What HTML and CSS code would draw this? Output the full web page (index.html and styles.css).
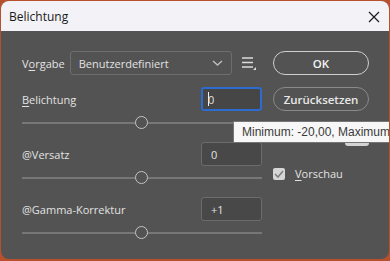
FILE: index.html
```html
<!DOCTYPE html>
<html lang="de">
<head>
    <meta charset="UTF-8">
    <title>Belichtung</title>
    <link rel="stylesheet" href="styles.css">
</head>
<body>
    <div class="window">
        <div class="titlebar">
            <span class="title">Belichtung</span>
            <svg class="close" width="12" height="12" viewBox="0 0 12 12">
                <path d="M1 1 L11 11 M11 1 L1 11" stroke="#1a1a1a" stroke-width="1.2" fill="none"/>
            </svg>
        </div>

        <div class="content">
            <div class="left">
                <div class="row">
                    <span class="label">V<u>o</u>rgabe</span>
                    <div class="select">
                        <span>Benutzerdefiniert</span>
                        <svg width="11" height="6" viewBox="0 0 11 6">
                            <path d="M1 1 L5.5 5 L10 1" stroke="#bdbdbd" stroke-width="1.4" fill="none"/>
                        </svg>
                    </div>
                    <svg class="menu-icon" width="15" height="14" viewBox="0 0 15 14">
                        <path d="M0 1 H11 M0 5.5 H11 M0 10 H11" stroke="#dcdcdc" stroke-width="1.6"/>
                        <path d="M11 13 L14 10 L14 13 Z" fill="#dcdcdc"/>
                    </svg>
                </div>

                <div class="row field">
                    <span class="label"><u>B</u>elichtung</span>
                    <div class="input focused"><span class="caret"></span>0</div>
                </div>
                <div class="slider"><span class="thumb"></span></div>

                <div class="row field">
                    <span class="label">@Versatz</span>
                    <div class="input">0</div>
                </div>
                <div class="slider"><span class="thumb"></span></div>

                <div class="row field">
                    <span class="label">@Gamma-Korrektur</span>
                    <div class="input">+1</div>
                </div>
                <div class="slider"><span class="thumb"></span></div>
            </div>

            <div class="right">
                <button class="btn primary">OK</button>
                <button class="btn">Zurücksetzen</button>
                <div class="hidden-btn"></div>
                <label class="check">
                    <span class="box">
                        <svg width="10" height="8" viewBox="0 0 10 8">
                            <path d="M1 4 L4 7 L9 1" stroke="#7d7d7d" stroke-width="1.5" fill="none"/>
                        </svg>
                    </span>
                    <span><u>V</u>orschau</span>
                </label>
            </div>
        </div>

        <div class="tooltip">Minimum: -20,00, Maximum</div>
    </div>
</body>
</html>
```

FILE: styles.css
```css
body {
    margin: 0;
    background-color: #b8502e;
    font-family: "Open Sans", "Noto Sans", sans-serif;
    overflow: hidden;
}

.window {
    position: relative;
    margin: 1px;
    height: 258px;
    background-color: #535353;
    border-radius: 8px;
    overflow: hidden;
}

.titlebar {
    height: 30px;
    background-color: #f3f3f7;
    display: flex;
    align-items: center;
    justify-content: space-between;
    padding: 0 9px 0 8px;
}
.title {
    font-size: 12px;
    color: #1a1a1a;
}
.close {
    margin-top: 1px;
}

.content {
    display: flex;
    gap: 11px;
    padding: 20px 20px 0 21px;
    color: #e2e2e2;
    font-size: 11px;
}

.left {
    width: 240px;
    display: flex;
    flex-direction: column;
}
.right {
    width: 96px;
    display: flex;
    flex-direction: column;
    gap: 12px;
}

.row {
    display: flex;
    align-items: center;
    height: 24px;
}
.row.field {
    justify-content: space-between;
    margin-top: 12px;
}
.row u {
    text-decoration-thickness: 1px;
    text-underline-offset: 2px;
}
.label {
    white-space: nowrap;
}

.select {
    width: 162px;
    height: 24px;
    margin-left: 5px;
    border: 1px solid #6e6e6e;
    border-radius: 3px;
    display: flex;
    align-items: center;
    justify-content: space-between;
    padding: 0 8px 0 8px;
    box-sizing: border-box;
}
.menu-icon {
    margin-left: 10px;
    margin-top: 2px;
}

.input {
    width: 61px;
    height: 24px;
    box-sizing: border-box;
    border: 1px solid #6c6c6c;
    border-radius: 3px;
    background-color: #484848;
    padding-left: 9px;
    display: flex;
    align-items: center;
}
.input.focused {
    border: 2px solid #2c6bd0;
    padding-left: 5px;
    background-color: #464646;
}
.caret {
    width: 1px;
    height: 14px;
    background-color: #f0f0f0;
    margin-right: -1px;
}

.slider {
    position: relative;
    height: 2px;
    background-color: #777;
    margin-top: 11px;
    margin-bottom: 6px;
}
.thumb {
    position: absolute;
    left: 113px;
    top: -6px;
    width: 11px;
    height: 11px;
    border: 1.5px solid #c4c4c4;
    border-radius: 50%;
    background-color: #535353;
}

.btn {
    height: 24px;
    border: 1px solid #8a8a8a;
    border-radius: 12px;
    background-color: #535353;
    color: #e8e8e8;
    font-family: inherit;
    font-size: 11.5px;
    font-weight: 600;
    padding: 0;
}
.btn.primary {
    border-color: #cfcfcf;
    color: #f4f4f4;
}

.hidden-btn {
    align-self: flex-end;
    width: 24px;
    height: 23px;
    background-color: #d4d4d4;
    border-radius: 3px;
}

.check {
    display: flex;
    align-items: center;
    gap: 10px;
    margin-top: 8px;
}
.box {
    width: 12px;
    height: 12px;
    background-color: #d6d6d6;
    border-radius: 2px;
    display: flex;
    align-items: center;
    justify-content: center;
}
.check u {
    text-decoration-thickness: 1px;
    text-underline-offset: 2px;
}

.tooltip {
    position: absolute;
    left: 232px;
    top: 120px;
    height: 20px;
    padding: 0 8px;
    white-space: nowrap;
    background-color: #f7f7f7;
    border: 1px solid #767676;
    color: #3a3a3a;
    font-family: "Liberation Sans", Arial, sans-serif;
    font-size: 12px;
    line-height: 20px;
}
```
